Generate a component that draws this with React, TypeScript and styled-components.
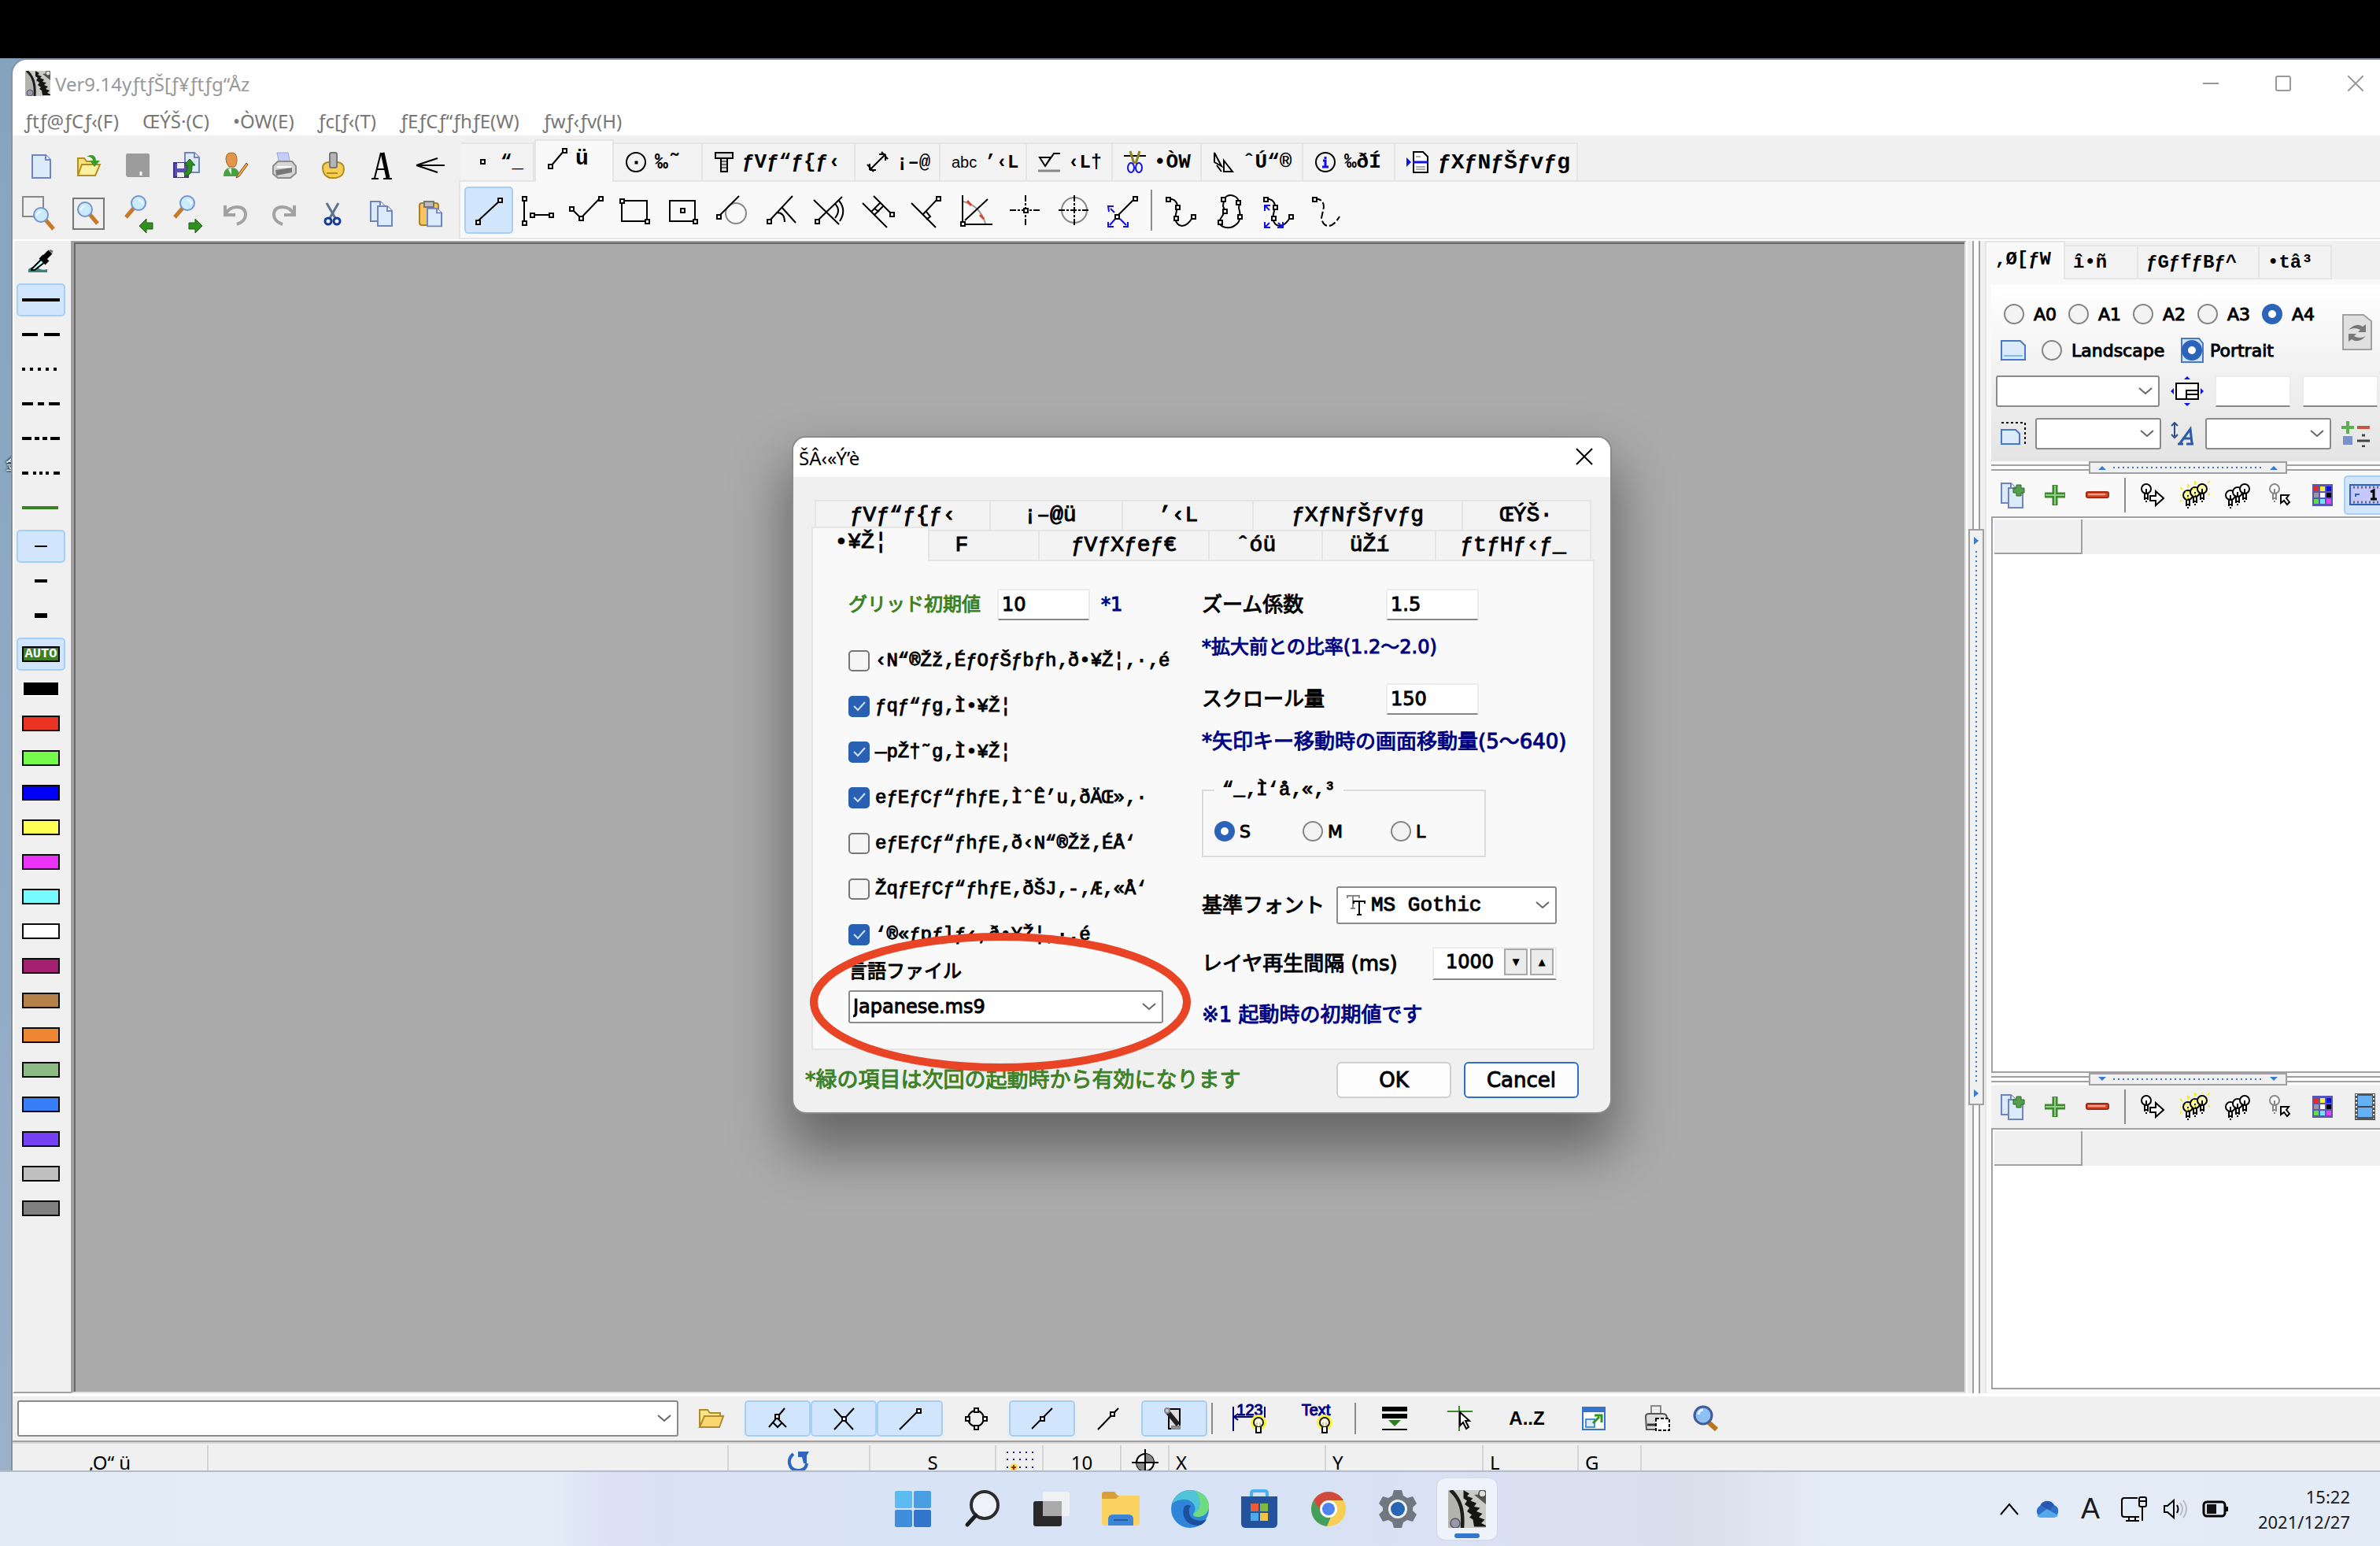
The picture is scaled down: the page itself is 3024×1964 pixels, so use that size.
import React, { ReactNode, useState } from "react";
import styled, { createGlobalStyle, css } from "styled-components";

const Global = createGlobalStyle`
  *, *::before, *::after { box-sizing: border-box; }
  body { margin: 0; background: #000; }
  button, input, select { font: inherit; color: inherit; margin: 0; }
`;

const ui = `"Noto Sans", "Noto Sans CJK JP", sans-serif`;
const gothic = `"DejaVu Sans", "Noto Sans CJK JP", sans-serif`;
const mono = `"Liberation Mono", "Noto Sans CJK JP", monospace`;

/* ---------- shell ---------- */

const Screen = styled.div`
  display: flex;
  flex-direction: column;
  min-height: 100vh;
  font-family: ${gothic};
  font-size: 24px;
  color: #000;
  overflow: hidden;
`;
const TopStrip = styled.div`
  height: 74px;
  background: #000;
`;
const Desktop = styled.main`
  flex: 1;
  display: flex;
  padding: 2px 0 0 16px;
  position: relative;
  background: linear-gradient(#84a4be, #9bb0c9);
`;
const DesktopCaption = styled.span`
  position: absolute;
  left: 7px;
  top: 504px;
  font-size: 20px;
  line-height: 24px;
  color: #fff;
  text-shadow: 0 0 3px #000, 0 0 3px #000;
`;
const AppWindow = styled.section`
  flex: 1;
  min-width: 0;
  display: flex;
  flex-direction: column;
  position: relative;
  background: #fff;
  border-top-left-radius: 18px;
  box-shadow: 0 0 0 2px #8293a5;
`;
const TitleBar = styled.header`
  display: flex;
  align-items: center;
  gap: 6px;
  height: 60px;
  padding-left: 16px;
  font-family: ${ui};
  color: #999;
`;
const TitleText = styled.h1`
  flex: 1;
  margin: 0;
  font-size: 24px;
  font-weight: 400;
`;
const CaptionButton = styled.button`
  width: 92px;
  height: 56px;
  border: 0;
  padding: 0;
  background: none;
  display: grid;
  place-items: center;
`;
const CaptionButtons = styled.div`
  display: flex;
  margin-right: -15px;
`;
const MenuBar = styled.nav`
  display: flex;
  gap: 30px;
  height: 36px;
  padding-left: 15px;
  font-family: ${ui};
  font-size: 24px;
  color: #777;
`;
const MenuItem = styled.button`
  border: 0;
  padding: 0;
  background: none;
  line-height: 34px;
  white-space: nowrap;
`;

/* ---------- toolbars ---------- */

const Toolbar = styled.div`
  display: flex;
  height: 132px;
  background: #f0f0f0;
`;
const FileTools = styled.div`
  display: grid;
  grid-template-columns: repeat(9, 62px);
  grid-auto-rows: 62px;
  padding: 7px 5px 0 4px;
`;
const ToolButton = styled.button<{ $on?: boolean; $w?: number; $h?: number }>`
  width: ${(p) => p.$w ?? 62}px;
  height: ${(p) => p.$h ?? 62}px;
  flex: none;
  padding: 0;
  display: grid;
  place-items: center;
  border: 2px solid transparent;
  border-radius: 5px;
  background: none;
  ${(p) =>
    p.$on &&
    css`
      background: #d1e6fd;
      border-color: #a6cff5;
    `}
`;
const TabArea = styled.div`
  flex: 1;
  min-width: 0;
  display: flex;
  flex-direction: column;
`;
const TabStrip = styled.div`
  display: flex;
  align-items: flex-end;
  height: 57px;
  padding-left: 3px;
`;
const ToolTab = styled.button<{ $w: number; $on?: boolean; $size: number }>`
  width: ${(p) => p.$w}px;
  height: ${(p) => (p.$on ? 54 : 48)}px;
  margin-bottom: ${(p) => (p.$on ? -2 : 0)}px;
  padding: 0 0 ${(p) => (p.$on ? 8 : 0)}px 14px;
  display: flex;
  align-items: center;
  gap: 10px;
  border: 2px solid #e5e5e5;
  border-bottom: 0;
  border-left-width: ${(p) => (p.$on ? 2 : 0)}px;
  background: ${(p) => (p.$on ? "#f9f9f9" : "#f3f3f3")};
  font-family: ${mono};
  font-weight: 700;
  font-size: ${(p) => p.$size}px;
  white-space: nowrap;
  position: relative;
`;
const AbcMark = styled.span`
  font-family: "Liberation Sans", sans-serif;
  font-weight: 400;
  font-size: 20px;
`;
const DrawPanel = styled.div`
  flex: 1;
  display: flex;
  align-items: center;
  padding-left: 5px;
  border: 2px solid #e5e5e5;
  border-right: 0;
  background: #f9f9f9;
`;
const Rule = styled.span<{ $h: number; $m: number }>`
  flex: none;
  width: 2px;
  height: ${(p) => p.$h}px;
  margin: 0 ${(p) => p.$m}px;
  background: #8c8c8c;
`;

/* ---------- work area ---------- */

const Work = styled.div`
  flex: 1;
  display: flex;
  position: relative;
  min-height: 0;
  border-top: 2px solid #fff;
  border-bottom: 4px solid #fff;
  background: #f0f0f0;
`;
const SideBar = styled.aside`
  width: 74px;
  display: flex;
  flex-direction: column;
  gap: 7px;
  padding: 3px 0 0 3px;
  border-left: 2px solid #fff;
  border-bottom: 2px solid #a0a0a0;
`;
const SideGroup = styled.div`
  display: flex;
  flex-direction: column;
  gap: 2px;
`;
const Swatch = styled.span<{ $c: string; $line?: string }>`
  width: 48px;
  height: 20px;
  background: ${(p) => p.$c};
  border: 2px solid ${(p) => p.$line ?? "#0a0a0a"};
`;
const AutoMark = styled.span`
  width: 48px;
  height: 20px;
  background: #3b8124;
  border: 2px solid #000;
  color: #fff;
  font: 700 17px/16px ${mono};
  text-align: center;
`;
const Canvas = styled.div`
  flex: 1;
  min-width: 0;
  background: #ababab;
  border: 2px solid;
  border-color: #a0a0a0 #e3e3e3 #e3e3e3 #a0a0a0;
  border-left-width: 4px;
  box-shadow: inset 2px 2px 0 #696969;
`;
const VSplit = styled.div`
  width: 24px;
  display: flex;
  flex-direction: column;
  align-items: center;
  border-left: 2px solid #fff;
`;
const VRail = styled.div`
  flex: 1 1 0;
  width: 10px;
  border: 2px solid #a0a0a0;
  border-width: 0 2px;
  background: #fff;
`;
const VGrip = styled.div`
  height: 50%;
  width: 20px;
  padding: 8px 0;
  display: flex;
  flex-direction: column;
  align-items: center;
  justify-content: space-between;
  border: 2px solid #a0a0a0;
`;
const VDots = styled.span`
  flex: 1;
  width: 2px;
  margin: 8px 0;
  background: repeating-linear-gradient(#3a7bd0 0 2px, transparent 2px 6px);
`;
const RightPanel = styled.aside`
  width: 502px;
  flex: none;
  display: flex;
  flex-direction: column;
  padding-left: 6px;
  padding-bottom: 5px;
  border-left: 2px solid #e5e5e5;
  background: #f9f9f9;
  overflow: hidden;
`;
const PanelTabs = styled.div`
  display: flex;
  align-items: flex-end;
  height: 49px;
  margin: 0 0 7px -6px;
  background: #f0f0f0;
`;
const PanelTab = styled.button<{ $w: number; $on?: boolean }>`
  width: ${(p) => p.$w}px;
  height: ${(p) => (p.$on ? 49 : 44)}px;
  padding: 0 0 ${(p) => (p.$on ? 4 : 0)}px 10px;
  text-align: left;
  white-space: nowrap;
  border: 2px solid #e5e5e5;
  border-left: 0;
  border-bottom-width: ${(p) => (p.$on ? 0 : 2)}px;
  background: ${(p) => (p.$on ? "#f9f9f9" : "#f3f3f3")};
  font-family: ${mono};
  font-weight: 700;
  font-size: 24px;
`;
const PageForm = styled.div`
  padding: 14px 0 10px;
  background: linear-gradient(#fff, #e4e4e4);
`;
const PageHead = styled.div`
  display: flex;
  align-items: center;
`;
const PageChoices = styled.div`
  width: 446px;
`;
const FormRow = styled.div<{ $h: number; $pl: number; $gap?: number }>`
  display: flex;
  align-items: center;
  gap: ${(p) => p.$gap ?? 0}px;
  height: ${(p) => p.$h}px;
  padding-left: ${(p) => p.$pl}px;
`;
const RadioLabel = styled.label<{ $w?: number; $gap?: number }>`
  display: flex;
  align-items: center;
  gap: ${(p) => p.$gap ?? 12}px;
  width: ${(p) => (p.$w ? `${p.$w}px` : "auto")};
  flex: none;
  font-size: 22px;
  -webkit-text-stroke: 1px #000;
`;
const Radio = styled.input.attrs({ type: "radio" })`
  appearance: none;
  width: 26px;
  height: 26px;
  flex: none;
  border: 2px solid #858585;
  border-radius: 50%;
  background: #f3f3f3;
  &:checked {
    border: 8px solid #2a63b8;
    background: #fff;
  }
`;
const Stack = styled.span`
  display: grid;
  place-items: center;
  > * {
    grid-area: 1 / 1;
  }
`;
const SelectWrap = styled.span<{ $w: number; $h: number }>`
  display: grid;
  align-items: center;
  flex: none;
  width: ${(p) => p.$w}px;
  height: ${(p) => p.$h}px;
  > * {
    grid-area: 1 / 1;
  }
  > svg.chev {
    justify-self: end;
    margin-right: 8px;
    pointer-events: none;
  }
  > svg.lead {
    justify-self: start;
    margin-left: 13px;
    pointer-events: none;
  }
`;
const SelectBox = styled.select<{ $pl?: number }>`
  appearance: none;
  width: 100%;
  height: 100%;
  padding: 0 40px 0 ${(p) => p.$pl ?? 4}px;
  border: 2px solid #8a8a8a;
  border-radius: 3px;
  background: #fff;
`;
const TextField = styled.input<{ $w: number; $h?: number }>`
  flex: none;
  width: ${(p) => p.$w}px;
  height: ${(p) => p.$h ?? 40}px;
  padding: 0 4px;
  border: 2px solid #ececec;
  border-bottom-color: #868686;
  border-radius: 3px;
  background: #fff;
`;
const HSplit = styled.div`
  height: 16px;
  flex: none;
  display: flex;
  align-items: center;
`;
const HRail = styled.span<{ $grow?: boolean }>`
  width: ${(p) => (p.$grow ? "auto" : "124px")};
  flex: ${(p) => (p.$grow ? 1 : "none")};
  height: 8px;
  border: 2px solid #a0a0a0;
  border-width: 2px 0;
  background: #fff;
`;
const HGrip = styled.span`
  width: 252px;
  height: 16px;
  padding: 0 9px;
  display: flex;
  align-items: center;
  gap: 8px;
  border: 2px solid #a0a0a0;
  background: #f0f0f0;
`;
const HDots = styled.span`
  flex: 1;
  height: 2px;
  background: repeating-linear-gradient(90deg, #3a7bd0 0 2px, transparent 2px 6px);
`;
const LayerTools = styled.div<{ $gray?: boolean }>`
  display: flex;
  align-items: center;
  height: 54px;
  flex: none;
  background: ${(p) => (p.$gray ? "#f0f0f0" : "#f9f9f9")};
`;
const LayerTable = styled.div<{ $grow: number }>`
  flex: ${(p) => p.$grow} 1 0;
  min-height: 0;
  border: 2px solid #a0a0a6;
  border-right: 0;
  background: #fff;
`;
const LayerHead = styled.div`
  height: 46px;
  display: flex;
  background: #f0f0f0;
  border: 2px solid #fff;
  border-width: 2px 0 0 2px;
`;
const LayerHeadCell = styled.span`
  width: 112px;
  border: 2px solid #a0a0a0;
  border-width: 0 2px 2px 0;
`;

/* ---------- bottom bars ---------- */

const BottomBar = styled.div`
  display: flex;
  align-items: center;
  height: 56px;
  padding-left: 6px;
  background: #f0f0f0;
`;
const SortMark = styled.span`
  font: 700 24px "Liberation Sans", sans-serif;
`;
const StatusBar = styled.footer`
  display: flex;
  height: 38px;
  border-top: 2px solid #a0a0a0;
  box-shadow: inset 0 2px 0 #d8d8d8;
  padding-top: 4px;
  background: #f0f0f0;
  overflow: hidden;
  font-family: ${ui};
  font-size: 24px;
`;
const StatusCell = styled.span<{ $w: number; $c?: boolean }>`
  flex: none;
  width: ${(p) => p.$w}px;
  display: flex;
  justify-content: ${(p) => (p.$c ? "center" : "flex-start")};
  padding: ${(p) => (p.$c ? "5px 0 0" : "5px 0 0 8px")};
  line-height: 34px;
  border-right: 2px solid #d4d4d4;
  white-space: pre;
`;
const TaskBar = styled.footer`
  display: grid;
  grid-template-columns: 1fr auto 1fr;
  align-items: center;
  height: 96px;
  border-top: 2px solid #b4bcc8;
  position: relative;
  background: linear-gradient(90deg, #e3ecf6 0, #e4edf7 23%, #dbe0f3 26%, #d9e3f6 36%, #d8e2f5 56%, #dcdfec 72%, #e4edf7 77%, #e3ebf6 100%);
  font-family: ${ui};
  font-size: 22px;
  color: #1a1a1a;
`;
const TaskApps = styled.div`
  grid-column: 2;
  display: flex;
`;
const TaskButton = styled.button<{ $on?: boolean }>`
  width: 76px;
  height: 78px;
  margin: 0 6px;
  padding: 0;
  display: grid;
  place-items: center;
  position: relative;
  border: 0;
  border-radius: 10px;
  background: ${(p) => (p.$on ? "#eef2fb" : "none")};
  box-shadow: ${(p) => (p.$on ? "0 0 0 1px #d3dae8" : "none")};
`;
const RunMark = styled.span`
  position: absolute;
  bottom: 2px;
  left: 22px;
  width: 32px;
  height: 6px;
  border-radius: 3px;
  background: #3577cf;
`;
const Tray = styled.div`
  justify-self: end;
  display: flex;
  align-items: center;
  gap: 18px;
  padding-right: 38px;
`;
const TrayLetter = styled.span`
  width: 40px;
  text-align: center;
  font-family: "Liberation Sans", sans-serif;
  font-size: 36px;
`;
const Clock = styled.time`
  width: 136px;
  text-align: right;
  line-height: 32px;
`;

/* ---------- dialog ---------- */

const Dialog = styled.section`
  position: absolute;
  left: 992px;
  top: 250px;
  width: 1038px;
  border-radius: 16px;
  background: #f0f0f0;
  box-shadow: 0 0 0 2px #8a8a8a, 0 40px 70px 10px rgba(0, 0, 0, 0.4);
`;
const DialogTitle = styled.header`
  display: flex;
  align-items: center;
  justify-content: space-between;
  height: 50px;
  padding-left: 7px;
  border-radius: 16px 16px 0 0;
  background: #fff;
  font-family: ${ui};
`;
const DialogName = styled.h2`
  margin: 0;
  font-size: 24px;
  font-weight: 400;
`;
const DialogClose = styled.button`
  width: 66px;
  height: 50px;
  border: 0;
  padding: 0;
  background: none;
`;
const DialogTabs = styled.div`
  margin: 29px 24px 0 25px;
`;
const DialogTabRow = styled.div<{ $pl?: number }>`
  display: flex;
  align-items: flex-end;
  height: 38px;
  margin-right: -2px;
  padding-left: ${(p) => p.$pl ?? 0}px;
`;
const DialogTab = styled.button<{ $w: number; $pr: number; $on?: boolean; $first?: boolean }>`
  width: ${(p) => p.$w}px;
  height: ${(p) => (p.$on ? 44 : 38)}px;
  margin-bottom: ${(p) => (p.$on ? -2 : 0)}px;
  margin-left: ${(p) => (p.$on ? -4 : 0)}px;
  padding: 0 ${(p) => p.$pr}px ${(p) => (p.$on ? 6 : 0)}px 0;
  position: relative;
  text-align: center;
  white-space: nowrap;
  border: 2px solid #e5e5e5;
  border-bottom: 0;
  border-left-width: ${(p) => (p.$on || p.$first ? 2 : 0)}px;
  background: ${(p) => (p.$on ? "#f9f9f9" : "#f3f3f3")};
  font-family: ${mono};
  font-size: 28px;
  line-height: 32px;
  -webkit-text-stroke: 1px #000;
`;
const DialogPage = styled.div`
  display: grid;
  grid-template-columns: 449px 1fr;
  margin: 0 20px 0 23px;
  padding: 31px 0 23px 45px;
  border: 2px solid #e5e5e5;
  background: #f9f9f9;
`;
const Column = styled.div`
  display: flex;
  flex-direction: column;
  align-items: flex-start;
  min-width: 0;
`;
const Row = styled.div<{ $h: number; $mt?: number }>`
  display: flex;
  align-items: center;
  height: ${(p) => p.$h}px;
  margin-top: ${(p) => p.$mt ?? 0}px;
  white-space: nowrap;
  -webkit-text-stroke-width: 1px;
`;
const FieldLabel = styled.label<{ $w?: number; $c?: string; $s?: number }>`
  flex: none;
  width: ${(p) => (p.$w ? `${p.$w}px` : "auto")};
  font-size: ${(p) => p.$s ?? 26}px;
  line-height: 34px;
  color: ${(p) => p.$c ?? "#000"};
`;
const Note = styled.span<{ $c?: string; $s?: number }>`
  font-size: ${(p) => p.$s ?? 26}px;
  line-height: 34px;
  color: ${(p) => p.$c ?? "#000080"};
`;
const StarNote = styled(Note)`
  margin-left: 14px;
`;
const CheckLabel = styled.label<{ $clip?: boolean }>`
  display: flex;
  align-items: center;
  gap: 7px;
  height: 58px;
  width: ${(p) => (p.$clip ? "402px" : "auto")};
  overflow: hidden;
  white-space: nowrap;
  font-family: ${mono};
  font-size: 24px;
  -webkit-text-stroke: 1px #000;
`;
const CheckBox = styled.input.attrs({ type: "checkbox" })`
  appearance: none;
  width: 27px;
  height: 27px;
  border: 2px solid #767676;
  border-radius: 5px;
  background: #f5f5f5;
  &:checked {
    background: #2a60b3;
    border-color: #2a60b3;
  }
`;
const Checks = styled.div`
  margin-top: 18px;
  display: flex;
  flex-direction: column;
`;
const SizeGroup = styled.fieldset`
  width: 361px;
  height: 100px;
  margin: 27px 0 0;
  padding: 24px 0 0 14px;
  border: 2px solid #dcdcdc;
  display: flex;
  align-items: flex-start;
`;
const SizeLegend = styled.legend`
  padding: 0 10px;
  font-family: ${mono};
  font-size: 24px;
  line-height: 30px;
  -webkit-text-stroke: 1px #000;
`;
const Spin = styled.span`
  display: flex;
  align-items: center;
  gap: 3px;
  width: 158px;
  height: 42px;
  padding: 0 2px 4px 0;
  border: 2px solid #ececec;
  border-bottom-color: #868686;
  background: #fff;
`;
const SpinInput = styled.input`
  flex: 1;
  min-width: 0;
  width: 80px;
  padding: 0 10px 0 0;
  border: 0;
  background: none;
  text-align: right;
`;
const SpinButton = styled.button`
  width: 30px;
  height: 34px;
  padding: 0;
  border: 2px solid #a9a9a9;
  background: #ececec;
  font-size: 12px;
  line-height: 20px;
  -webkit-text-stroke-width: 0;
`;
const DialogFoot = styled.div`
  display: flex;
  align-items: center;
  gap: 16px;
  height: 79px;
  padding: 0 40px 4px 15px;
  -webkit-text-stroke-width: 1px;
`;
const FootNote = styled(Note)`
  flex: 1;
  white-space: nowrap;
`;
const PushButton = styled.button<{ $focus?: boolean }>`
  width: 146px;
  height: 46px;
  padding: 0;
  border: 2px solid ${(p) => (p.$focus ? "#2f6fc4" : "#cfcfcf")};
  border-radius: 6px;
  background: #fdfdfd;
  font-size: 26px;
`;
const FontPick = styled.span`
  font-family: ${mono};
  font-size: 26px;
`;
const Marker = styled.svg`
  position: absolute;
  left: 19px;
  top: 626px;
  width: 488px;
  height: 182px;
  pointer-events: none;
`;

/* ---------- drawings ---------- */

type IcoProps = { w?: number; h?: number; v?: string; children: ReactNode; className?: string };
const Ico = ({ w = 32, h = w, v, children, className }: IcoProps) => (
  <svg className={className} width={w} height={h} viewBox={v ?? `0 0 ${w} ${h}`} fill="none" stroke="#000" strokeWidth={2} aria-hidden>
    {children}
  </svg>
);
const P = ({ x, y }: { x: number; y: number }) => <rect x={x - 2} y={y - 2} width={5} height={5} fill="#fff" />;
const Chevron = () => (
  <Ico className="chev" w={20} h={12}>
    <path d="M2 2l8 7 8-7" stroke="#666" />
  </Ico>
);
const Gear = ({ s }: { s: number }) => (
  <Ico w={s} v="0 0 32 32">
    <rect width="32" height="32" fill="#c9c9c5" stroke="none" />
    <path d="M0 0h5c7 8 7 20 6 32H0z" fill="#b4b4ae" stroke="none" />
    <path d="M2 0c9 8 11 18 10 32" stroke="#1d1d1b" strokeWidth="3" />
    <path d="M13 0l5 3-2 2 5 2-2 2 5 2-2 3 5 1-3 3 5 2-3 3 5 2-3 3 6 3h-12l-1-6-3-2 2-2-4-3 2-3-4-3 2-3-3-2z" fill="#151514" stroke="none" />
    <path d="M22 4l10 8V3z" fill="#55554f" stroke="none" />
    <circle cx="29" cy="3" r="3" fill="#ddd" stroke="#444" strokeWidth="1" />
    <circle cx="6" cy="28" r="4" fill="#99a" stroke="#556" strokeWidth="1" />
  </Ico>
);
const Page = ({ x = 0, y = 0 }: { x?: number; y?: number }) => (
  <g transform={`translate(${x} ${y})`}>
    <path d="M1 1h12l6 6v19H1z" fill="#dcebfb" stroke="#7085c0" />
    <path d="M13 1v6h6" fill="#fff" stroke="#7085c0" />
  </g>
);
const Lens = ({ x = 0, y = 0, flip = false }: { x?: number; y?: number; flip?: boolean }) => (
  <g transform={`translate(${x} ${y})${flip ? " scale(-1 1)" : ""}`}>
    <path d="M4 4l12 14" stroke="#c87a2c" strokeWidth="5" />
    <circle cx="0" cy="0" r="9" fill="#c9ebfd" stroke="#7394cc" />
    <path d="M-5 1a5 5 0 0 1 5-5" stroke="#fff" />
  </g>
);

const fileIcons: [string, ReactNode][] = [
  ["New", <Ico w={32} h={34}><g transform="translate(5 3)"><path d="M1 1h17l6 6v23H1z" fill="#dcebfb" stroke="#7085c0" /><path d="M18 1v6h6" fill="#fff" stroke="#7085c0" /></g></Ico>],
  ["Open", <Ico w={34}><path d="M3 30V8h8l3 4h11v4" fill="#f7e27a" stroke="#b58d24" /><path d="M3 30l5-14h23l-6 14z" fill="#fdf0a0" stroke="#b58d24" /><path d="M14 6c8-5 12 0 12 5h5l-7 8-6-8h4c0-3-3-5-8-5z" fill="#3b9b28" stroke="none" /></Ico>],
  ["Save", <Ico w={32} h={34}><path d="M1 4q0-2 2-2h26q2 0 2 2v28H3l-2-2z" fill="#9c9c9c" stroke="none" /><path d="M20 25v5" stroke="#fff" strokeWidth="3" /></Ico>],
  ["Save as", <Ico w={36}><Page x={15} y={1} /><path d="M2 15h18v18H2z" fill="#5b4fae" stroke="#3d3483" /><path d="M6 15h9v7H6zM6 27h9v6H6z" fill="#eee" stroke="none" /><path d="M16 31q10 0 9-13h4l-7-8-7 8h4q1 8-4 9z" fill="#2d8f22" stroke="#1b6114" strokeWidth="1" /></Ico>],
  ["User", <Ico w={34}><path d="M2 31q0-11 10-11t10 11z" fill="#49a044" stroke="none" /><path d="M12 20v9l-4-7z" fill="#fff" stroke="none" /><path d="M5 9q0-8 7-8t7 8-3 10H9Q5 14 5 9z" fill="#e2964a" stroke="#a8642a" strokeWidth="1" /><path d="M31 14L20 29l-2 4 4-2 11-15z" fill="#f0b23c" stroke="#8a3b1a" strokeWidth="1" /></Ico>],
  ["Print", <Ico w={34}><path d="M8 1h14l3 14H11z" fill="#c3cef8" stroke="#9aa6dc" strokeWidth="1" /><path d="M3 18l6-6h18l5 6v9l-7 6H9l-6-5z" fill="#d6d6d6" stroke="#8b8b8b" /><path d="M6 23l21-3v6l-20 4z" fill="#777" stroke="none" /><path d="M8 19h18" stroke="#fff" /></Ico>],
  ["Hand", <Ico w={34}><path d="M4 20q0-6 7-7h12q8 1 8 9 0 9-10 11h-8q-9-3-9-13z" fill="#f3cf55" stroke="#b48a1d" /><rect x="13" y="1" width="9" height="19" rx="2" fill="#b5b5b5" stroke="#777" /><path d="M9 27h14" stroke="#b48a1d" /></Ico>],
  ["Font", <Ico w={28} h={38}><path d="M5 35L13 3" strokeWidth="2" /><path d="M15 3l7 32" strokeWidth="5" /><path d="M8 24h10M1 36h9M16 36h11" /></Ico>],
  ["Arrow", <Ico w={38} h={30}><path d="M1 15h36M1 15L28 6M1 15l27 9" /></Ico>],
  ["Zoom window", <Ico w={46} h={46}><rect x="1" y="1" width="26" height="25" stroke="#888" /><Lens x={24} y={24} /></Ico>],
  ["Zoom fit", <Ico w={42} h={42}><rect x="1" y="1" width="39" height="39" stroke="#777" /><Lens x={16} y={15} /></Ico>],
  ["Zoom back", <Ico w={42} h={50}><Lens x={22} y={11} flip /><path d="M40 36v8h-8v5l-9-9 9-9v5z" fill="#338f20" stroke="#1d6212" strokeWidth="1" /></Ico>],
  ["Zoom next", <Ico w={42} h={50}><Lens x={22} y={11} flip /><path d="M24 36v8h8v5l9-9-9-9v5z" fill="#338f20" stroke="#1d6212" strokeWidth="1" /></Ico>],
  ["Undo", <Ico w={32}><path d="M3 5v12h13M3 17Q8 7 18 7q11 0 11 10 0 8-11 12" stroke="#a2a2a2" strokeWidth="4" /></Ico>],
  ["Redo", <Ico w={32}><path d="M29 5v12H16M29 17Q24 7 14 7 3 7 3 17q0 8 11 12" stroke="#a2a2a2" strokeWidth="4" /></Ico>],
  ["Cut", <Ico w={26} h={30}><path d="M5 1l11 19M20 1L9 20" stroke="#5c7391" strokeWidth="3" /><circle cx="7" cy="24" r="4" stroke="#143a9e" strokeWidth="3" /><circle cx="18" cy="24" r="4" stroke="#143a9e" strokeWidth="3" /></Ico>],
  ["Copy", <Ico w={32} h={34}><Page x={1} y={0} /><Page x={10} y={6} /></Ico>],
  ["Paste", <Ico w={32} h={34}><rect x="2" y="3" width="24" height="28" rx="3" fill="#f6c560" stroke="#a8802c" /><path d="M8 1h12v7H8z" fill="#bbb" stroke="#777" /><g transform="translate(11 9) scale(1 .9)"><Page /></g></Ico>],
];

const Spline = ({ dash }: { dash?: string }) => (
  <path d="M7 12h5q7 2 7 10l-3 14q2 10 9 10t14-12" strokeDasharray={dash} />
);
const T = ({ children }: { children: ReactNode }) => <Ico w={44} h={52}>{children}</Ico>;
const blueArrows = (x: number, y: number) => (
  <path d={`M${x} ${y + 7}v-7h7M${x} ${y}l6 6M${x} ${y + 21}v7h7M${x} ${y + 28}l6-6M${x + 16} ${y + 28}h7v-7M${x + 23} ${y + 28}l-6-6`} stroke="#1212e6" />
);
const drawIcons: [string, ReactNode][] = [
  ["Line", <T><path d="M8 40L36 14" /><P x={8} y={41} /><P x={36} y={13} /></T>],
  ["Parallel", <T><path d="M5 12v30M15 32h24" /><P x={5} y={11} /><P x={5} y={42} /><P x={15} y={32} /><P x={39} y={32} /></T>],
  ["Polyline", <T><path d="M3 24l12 12 25-26" /><P x={3} y={24} /><P x={15} y={36} /><P x={40} y={11} /></T>],
  ["Rectangle", <T><path d="M5 14h32v26H5z" /><P x={5} y={14} /><P x={37} y={40} /></T>],
  ["Center rectangle", <T><path d="M4 14h32v26H4z" /><P x={20} y={26} /><P x={36} y={40} /></T>],
  ["Tangent", <T><circle cx="26" cy="30" r="13" stroke="#888" /><path d="M4 34L30 8" /><P x={4} y={34} /></T>],
  ["Bisector", <T><path d="M6 40L36 8M22 22l18 20M16 29q10 0 10 12" /><P x={6} y={40} /></T>],
  ["Angle", <T><path d="M5 40L37 9M1 13l32 31M28 18q8 8 0 18M33 14q10 12 1 26" /><P x={5} y={40} /></T>],
  ["Perpendicular", <T><path d="M1 17l31 31M15 8l22 22M12 28l11-11M16 32l11-11M16 24l6 4" /><P x={38} y={31} /></T>],
  ["Normal", <T><path d="M1 17l31 31M16 31l19-20M20 28l5 6-5 4" /><P x={35} y={11} /></T>],
  ["Angle line", <T><path d="M5 15q22 6 28 28" stroke="#999" /><path d="M4 7v37h38M7 39L36 12" /><path d="M10 14l5 6M26 32l5 5" stroke="#e0452c" strokeWidth="3" /><P x={4} y={43} /></T>],
  ["Cross", <T><path d="M2 26h40M22 7v38" strokeDasharray="8 2 3 2" /><P x={22} y={26} /></T>],
  ["Center mark", <T><circle cx="22" cy="26" r="16" stroke="#888" /><path d="M2 26h40M22 7v38" strokeDasharray="8 2 3 2" /></T>],
  ["Extend", <T><path d="M36 12L14 34" /><path d="M4 28l-1-7 7 0M6 24l5 5M12 37l-7 8M3 41v6h7M18 37l8 8M22 47h6v-6" stroke="#1212e6" /><P x={37} y={11} /><P x={14} y={34} /></T>],
];
const curveIcons: [string, ReactNode][] = [
  ["Spline", <T><Spline /><P x={7} y={12} /><P x={19} y={22} /><P x={17} y={36} /><P x={39} y={34} /></T>],
  ["Closed spline", <T><path d="M16 12q6-8 15-3 6 4 4 14 4 14-2 20-8 8-18 4-8-4-2-12 6-8 2-14z" /><P x={15} y={12} /><P x={34} y={16} /><P x={17} y={27} /><P x={36} y={34} /><P x={11} y={41} /></T>],
  ["Edit spline", <T><Spline />{blueArrows(6, 20)}<P x={7} y={12} /><P x={19} y={22} /><P x={17} y={36} /><P x={39} y={34} /></T>],
  ["Split spline", <T><Spline dash="9 3" /><P x={7} y={12} /></T>],
];

const toolTabs: [number, string, ReactNode, number][] = [
  [93, "“_", <Ico w={26}><rect x="11" y="10" width="5" height="5" /></Ico>, 24],
  [101, "ü", <Ico w={26} h={28}><path d="M5 24L22 4" /><P x={4} y={24} /><P x={22} y={4} /></Ico>, 28],
  [113, "‰˜", <Ico w={28}><circle cx="14" cy="14" r="12" /><rect x="13" y="13" width="3" height="3" fill="#000" strokeWidth="1" /></Ico>, 28],
  [194, "ƒVƒ“ƒ{ƒ‹", <Ico w={26} h={28}><path d="M2 2h22v7H2zM9 9h8v17H9z" fill="#ddd" /><path d="M9 13h8M9 17h8M9 21h8" strokeWidth="1" /></Ico>, 26],
  [108, "¡–@", <Ico w={28} h={28}><path d="M4 24L24 4M4 24v-8M4 24h8M24 4v8M24 4h-8M1 17l8 9M19 1l8 9" /></Ico>, 24],
  [110, "’‹L", <AbcMark>abc</AbcMark>, 24],
  [109, "‹L†", <Ico w={28} h={26}><path d="M2 7h14L9 18zM9 18L20 2h8" /><path d="M0 24h28" stroke="#888" strokeWidth="3" /></Ico>, 24],
  [113, "•ÒW", <Ico w={28} h={30}><path d="M0 7h28" /><path d="M8 1l5 16M20 1l-5 16" stroke="#8b8420" strokeWidth="3" /><ellipse cx="9" cy="22" rx="4" ry="6" stroke="#1212e6" /><ellipse cx="19" cy="22" rx="4" ry="6" stroke="#1212e6" /></Ico>, 26],
  [129, "ˆÚ“®", <Ico w={28} h={28}><path d="M2 2v12l9 5zM14 12l11 14H14zM5 18l6 8" /></Ico>, 26],
  [117, "‰ðÍ", <Ico w={28} h={28}><circle cx="14" cy="14" r="12" /><path d="M14 7v3M11 12h3v8M10 20h8" stroke="#1212e6" strokeWidth="3" /></Ico>, 26],
  [232, "ƒXƒNƒŠƒvƒg", <Ico w={30} h={30}><path d="M9 2h12l6 6v20H9z" fill="#fff" /><path d="M12 8h6M12 21h12M12 24h12" stroke="#aaa" /><path d="M8 15h20" stroke="#1212e6" strokeWidth="3" /><path d="M0 9l6 6-6 6z" fill="#1212e6" stroke="none" /></Ico>, 28],
];

const lineDashes = ["20 8", "4 6", "14 6 8 6", "12 4 6 4 6 4", "8 6 4 4 4 4 4 6"];
const swatches = ["#ea3323", "#75fb4c", "#0000f5", "#ffff54", "#ea33f7", "#75fbfd", "#ffffff", "#a62072", "#b5824b", "#ee8732", "#8cbb84", "#387ef7", "#7640f5", "#c0c0c0", "#808080"];

const bulb = (x: number, y: number, lit = false, c = "#000") => (
  <g transform={`translate(${x} ${y})`}>
    {lit && <path d="M0-9v-3M7-7l3-3M-7-7l-3-3M9 0h3M-9 0h-3M8 6l3 3M-8 6l-3 3" stroke="#f2ee28" />}
    <circle r="6" fill={lit ? "#fffcb0" : "#fff"} stroke={c} />
    <path d="M-2 6v8M2 6v8M0 0v6M-3 12h6M-1 16h2" stroke={c} />
  </g>
);
const frames = (
  <Ico w={40} h={32}><rect x="1" y="3" width="40" height="25" fill="#c5c8fb" stroke="#2f5fc0" /><path d="M5 6h36M5 25h36" stroke="#667" strokeWidth="3" strokeDasharray="2 3" /><path d="M8 18v-3h5" stroke="#2f5fc0" /><path d="M27 12l4-2v11M27 21h8" strokeWidth="3" /></Ico>
);
const film = (
  <Ico w={26} h={34}><rect x="2" y="1" width="22" height="31" fill="#66b0f5" stroke="#555" strokeWidth="4" /><path d="M2 1v31M24 1v31" stroke="#fff" strokeDasharray="2 3" /><path d="M4 17h18" stroke="#444" /></Ico>
);
const layerIcons: [string, ReactNode][] = [
  ["Add copy", <Ico w={32} h={34}><Page x={1} y={1} /><Page x={10} y={7} /><path d="M17 8h4V4h6v4h4v6h-4v4h-6v-4h-4z" fill="#559e4c" stroke="#2c6b26" strokeWidth="1" /></Ico>],
  ["Add", <Ico w={30}><path d="M15 2v26M2 15h26" stroke="#3f8a2e" strokeWidth="7" /><path d="M15 3v24M3 15h24" stroke="#93cf86" strokeWidth="2" /></Ico>],
  ["Remove", <Ico w={30}><rect x="1" y="11" width="28" height="7" rx="2" fill="#e0492c" stroke="#a22a14" /><path d="M3 14h22" stroke="#f3a58f" /></Ico>],
];
const lampIcons: [string, ReactNode][] = [
  ["Next lamp", <Ico w={32} h={34}>{bulb(8, 9)}<path d="M13 18h7v-6l10 9-10 9v-6h-7z" fill="#fff" /></Ico>],
  ["Lamps on", <Ico w={38} h={36}>{bulb(10, 18, true)}{bulb(19, 14, true)}{bulb(28, 10, true)}</Ico>],
  ["Lamps off", <Ico w={38} h={36}>{bulb(10, 18)}{bulb(19, 14)}{bulb(28, 10)}</Ico>],
  ["Lamp pick", <Ico w={32} h={34}>{bulb(9, 9, false, "#888")}<path d="M17 17h10l-3 4 4 5-3 3-4-5-4 3z" fill="#fff" /></Ico>],
  ["Palette", <Ico w={26} h={28}><rect x="1" y="1" width="24" height="26" fill="#5a56b8" stroke="#5a56b8" />{["#e02f22", "#f6f03a", "#0a12e0", "#999", "#fff", "#000", "#5de23b", "#6fe6f3", "#e745ea"].map((c, i) => <rect key={c} x={2 + (i % 3) * 8} y={3 + Math.floor(i / 3) * 8} width="6" height="6" fill={c} stroke="none" />)}</Ico>],
];

const snapIcons: [string, boolean, ReactNode][] = [
  ["Snap end", true, <Ico w={30}><path d="M24 2L4 26M14 14l12 12M9 20l6 6 6-6" /><P x={14} y={12} /></Ico>],
  ["Snap cross", true, <Ico w={30}><path d="M3 3l24 26M28 2L3 29" /><P x={15} y={15} /></Ico>],
  ["Snap point", true, <Ico w={30}><path d="M2 29L26 5" /><P x={26} y={5} /></Ico>],
  ["Snap circle", false, <Ico w={32}><circle cx="16" cy="16" r="10" /><P x={16} y={5} /><P x={5} y={16} /><P x={27} y={16} /><P x={16} y={27} /></Ico>],
  ["Snap middle", true, <Ico w={30}><path d="M2 28L28 2" /><P x={15} y={15} /></Ico>],
  ["Snap near", false, <Ico w={30}><path d="M2 29L28 2" /><P x={20} y={9} /></Ico>],
  ["Snap switch", true, <Ico w={30} h={32}><rect x="8" y="4" width="14" height="25" fill="#ddd" /><path d="M12 26h10v3H12z" fill="#999" stroke="#888" /><path d="M6 7l14 17" strokeWidth="6" stroke="#222" /><circle cx="6" cy="6" r="3" fill="#ccc" stroke="#888" /></Ico>],
];
const smallBulb = (x: number, y: number) => (
  <g transform={`translate(${x} ${y})`}>
    <circle r="10" fill="#fbf636" stroke="none" />
    <circle r="6" fill="#fffde0" stroke="#1b1b1b" />
    <path d="M-2 0v5M2 0v5" stroke="#999" strokeWidth="1" />
    <path d="M-3 6v7h6V6" fill="#fff" />
  </g>
);
const MarkText = styled.span`
  position: relative;
  display: grid;
  width: 46px;
  height: 40px;
  font: 400 20px/18px "Liberation Sans", sans-serif;
  color: #000080;
  text-align: center;
  -webkit-text-stroke: 1px #000080;
  > svg {
    position: absolute;
    inset: 0;
  }
`;
const viewIcons: [string, number, ReactNode][] = [
  ["Stack", 84, <Ico w={34}><path d="M1 5h32M1 14h32" strokeWidth="6" /><path d="M9 19h16l-8 8z" fill="#2f7d23" stroke="none" /><path d="M1 31h32" /></Ico>],
  ["Pointer", 84, <Ico w={34}><path d="M0 8h32M15 1v32" stroke="#3b8a2a" /><path d="M16 9v17l4-4 4 8 3-2-4-8h5z" fill="#fff" /></Ico>],
  ["Sort", 84, <SortMark>A..Z</SortMark>],
  ["Open window", 86, <Ico w={30}><rect x="1" y="1" width="28" height="28" fill="#fff" stroke="#3474cf" /><path d="M1 4h28" stroke="#3474cf" strokeWidth="6" /><path d="M5 16h11v10H5z" stroke="#4d90d8" fill="#dcecfb" /><path d="M14 21l8-8M16 11h9v9" stroke="#2f9420" strokeWidth="3" /></Ico>],
  ["Print preview", 74, <Ico w={34} h={34}><path d="M10 1h12v10H10z" fill="#eee" stroke="#888" /><path d="M3 15q0-4 4-4h18q5 0 5 6v14H4z" fill="#ddd" stroke="#555" /><path d="M16 17h17v15H16z" fill="#fff" strokeDasharray="4 2" /><path d="M5 25h10" stroke="#333" strokeWidth="3" /></Ico>],
  ["Search", 50, <Ico w={34} h={34}><path d="M21 22l10 9" stroke="#b8741e" strokeWidth="6" /><circle cx="14" cy="13" r="11" fill="#8fc0f5" stroke="#3f5c96" strokeWidth="3" /><path d="M8 12a6 6 0 0 1 6-6" stroke="#e7f3ff" strokeWidth="3" /></Ico>],
];

const taskIcons: [string, ReactNode][] = [
  ["Start", <Ico w={48}><g stroke="none"><rect x="1" y="1" width="22" height="22" rx="2" fill="#5cbcf1" /><rect x="25" y="1" width="22" height="22" rx="2" fill="#4a9fe2" /><rect x="1" y="25" width="22" height="22" rx="2" fill="#3f8ddb" /><rect x="25" y="25" width="22" height="22" rx="2" fill="#3275cd" /></g></Ico>],
  ["Search", <Ico w={46} h={48}><circle cx="26" cy="19" r="17" stroke="#2c2c2c" strokeWidth="4" fill="#eef1fa" /><path d="M15 32L4 44" stroke="#1c1c1c" strokeWidth="5" strokeLinecap="round" /></Ico>],
  ["Task view", <Ico w={48}><g stroke="none"><rect x="1" y="14" width="36" height="32" rx="3" fill="#2a2a2a" /><rect x="13" y="2" width="34" height="31" rx="3" fill="#f4f4f4" opacity=".8" /><path d="M13 14h24v19H13z" fill="#aaa" /></g></Ico>],
  ["Explorer", <Ico w={50}><g stroke="none"><path d="M1 6q0-3 3-3h13l4 5h25q3 0 3 3v8H1z" fill="#d99f36" /><path d="M1 12h18l4-4h23q3 0 3 3v32q0 3-3 3H4q-3 0-3-3z" fill="#fbd362" /><path d="M9 46V38q0-6 6-6h20q6 0 6 6v8z" fill="#3b85d6" /><path d="M16 39h18" stroke="#235c9f" strokeWidth="2" /></g></Ico>],
  ["Edge", <Ico w={50}><g stroke="none"><circle cx="25" cy="25" r="24" fill="#2f86d8" /><path d="M2 19C5 7 15 1 25 1c14 0 24 9 24 20 0 9-7 14-14 14-5 0-7-2-5-5 5-9-3-17-12-17C11 13 5 15 2 19z" fill="#4fc3d8" /><path d="M32 2c10 3 17 10 17 19 0 9-7 14-14 14-5 0-7-2-5-5 8-3 12-14 2-28z" fill="#6edb7c" /><path d="M17 24c-3 13 6 22 18 22 5 0 9-4 11-8-9 4-21 1-22-8-1-4 0-6 2-9-4-2-8-1-9 3z" fill="#1d4f9c" /></g></Ico>],
  ["Store", <Ico w={48} h={50}><path d="M14 9V5q0-3 3-3h14q3 0 3 3v4" stroke="#48b1ef" strokeWidth="4" /><path d="M1 9h46v34q0 6-6 6H7q-6 0-6-6z" fill="#23539b" stroke="none" /><g stroke="none"><path d="M13 18h10v10H13z" fill="#ea5a33" /><path d="M25 18h10v10H25z" fill="#7fba3b" /><path d="M13 30h10v10H13z" fill="#4ea9ea" /><path d="M25 30h10v10H25z" fill="#f7c143" /></g></Ico>],
  ["Chrome", <Ico w={46}><g stroke="none"><circle cx="23" cy="23" r="22" fill="#f7cf54" /><path d="M4 12a22 22 0 0 1 38 0H23L13 27z" fill="#d1493b" /><path d="M4 12l11 17 11 4-5 12A22 22 0 0 1 4 12z" fill="#459f5c" /><circle cx="23" cy="23" r="11" fill="#fff" /><circle cx="23" cy="23" r="8" fill="#4f83ee" /></g></Ico>],
  ["Settings", <Ico w={50}><g stroke="none"><path d="M20 1h10l2 7 5 3 7-2 5 9-5 5v4l5 5-5 9-7-2-5 3-2 7H20l-2-7-5-3-7 2-5-9 5-5v-4l-5-5 5-9 7 2 5-3z" fill="#6f7881" /><circle cx="25" cy="25" r="12" fill="#f1f1f1" /><circle cx="25" cy="25" r="9" fill="#2567b4" /></g></Ico>],
  ["Drafting", <Gear s={48} />],
];

/* ---------- parts ---------- */

type PickProps = { w: number; h?: number; name: string; id?: string; value?: string; lead?: ReactNode; pl?: number };
const Pick = ({ w, h = 42, name, id, value = "", lead, pl }: PickProps) => (
  <SelectWrap $w={w} $h={h}>
    <SelectBox id={id} aria-label={id ? undefined : name} $pl={pl} defaultValue={value}>
      <option>{value}</option>
    </SelectBox>
    {lead}
    <Chevron />
  </SelectWrap>
);

const Split = ({ up }: { up?: boolean }) => {
  const tri = (
    <Ico w={12} h={6}>
      <path d={up ? "M1 6l5-5 5 5z" : "M1 0l5 5 5-5z"} fill="#3a7bd0" stroke="none" />
    </Ico>
  );
  return (
    <HSplit>
      <HRail />
      <HGrip>
        {tri}
        <HDots />
        {tri}
      </HGrip>
      <HRail $grow />
    </HSplit>
  );
};

const Layers = ({ gray, grow, last }: { gray?: boolean; grow: number; last: ReactNode }) => (
  <>
    <LayerTools $gray={gray}>
      {layerIcons.map(([n, i]) => (
        <ToolButton key={n} aria-label={n} $w={54} $h={48}>{i}</ToolButton>
      ))}
      <Rule $h={44} $m={7} />
      {lampIcons.map(([n, i]) => (
        <ToolButton key={n} aria-label={n} $w={54} $h={48}>{i}</ToolButton>
      ))}
      <ToolButton aria-label="Frames" $w={54} $h={50} $on={!gray}>{last}</ToolButton>
    </LayerTools>
    <LayerTable $grow={grow}>
      <LayerHead>
        <LayerHeadCell />
      </LayerHead>
    </LayerTable>
  </>
);

const checks: [string, boolean, boolean][] = [
  ["‹N“®Žž‚ÉƒOƒŠƒbƒh‚ð•¥Ž¦‚·‚é", false, false],
  ["ƒqƒ“ƒg‚Ì•¥Ž¦", true, false],
  ["—pŽ†˜g‚Ì•¥Ž¦", true, false],
  ["eƒEƒCƒ“ƒhƒE‚ÌˆÊ’u‚ðÄŒ»‚·", true, true],
  ["eƒEƒCƒ“ƒhƒE‚ð‹N“®Žž‚ÉÅ‘", false, true],
  ["ŽqƒEƒCƒ“ƒhƒE‚ðŠJ‚-‚Æ‚«Å‘", false, true],
  ["‘®«ƒpƒlƒ‹‚ð•¥Ž¦‚·‚é", true, false],
];

const Check = ({ text, on, clip }: { text: string; on: boolean; clip: boolean }) => {
  const [v, setV] = useState(on);
  return (
    <CheckLabel $clip={clip}>
      <Stack>
        <CheckBox checked={v} onChange={() => setV(!v)} />
        {v && (
          <Ico w={18} h={14}>
            <path d="M2 7l5 5 9-10" stroke="#cfe0f7" />
          </Ico>
        )}
      </Stack>
      {text}
    </CheckLabel>
  );
};

const backTabs: [string, number, number][] = [
  ["ƒVƒ“ƒ{ƒ‹", 224, 0],
  ["¡–@ü", 168, 16],
  ["’‹L", 166, 24],
  ["ƒXƒNƒŠƒvƒg", 266, 0],
  ["ŒÝŠ·", 163, 0],
];
const frontTabs: [string, number, number][] = [
  ["•¥Ž¦", 150, 24],
  ["F", 140, 56],
  ["ƒVƒXƒeƒ€", 216, 0],
  ["ˆóü", 144, 24],
  ["üŽí", 144, 24],
  ["ƒtƒHƒ‹ƒ_", 197, 0],
];

const Settings = () => (
  <Dialog role="dialog" aria-labelledby="dlg">
    <DialogTitle>
      <DialogName id="dlg">ŠÂ‹«Ý’è</DialogName>
      <DialogClose aria-label="Close">
        <Ico w={22}><path d="M1 1l20 20M21 1L1 21" /></Ico>
      </DialogClose>
    </DialogTitle>
    <DialogTabs role="tablist">
      <DialogTabRow $pl={2}>
        {backTabs.map(([t, w, pr], k) => (
          <DialogTab key={t} role="tab" $w={w} $pr={pr} $first={k === 0}>{t}</DialogTab>
        ))}
      </DialogTabRow>
      <DialogTabRow $pl={2}>
        {frontTabs.map(([t, w, pr], k) => (
          <DialogTab key={t} role="tab" $w={w} $pr={pr} $on={k === 0} aria-selected={k === 0}>{t}</DialogTab>
        ))}
      </DialogTabRow>
    </DialogTabs>
    <DialogPage>
      <Column>
        <Row $h={48}>
          <FieldLabel htmlFor="grid" $w={189} $c="#3b8124" $s={24}>グリッド初期値</FieldLabel>
          <TextField id="grid" $w={118} defaultValue="10" />
          <StarNote $s={24}>*1</StarNote>
        </Row>
        <Checks>
          {checks.map(([t, on, clip]) => (
            <Check key={t} text={t} on={on} clip={clip} />
          ))}
        </Checks>
        <Row $h={36}>
          <FieldLabel htmlFor="lang" $s={24}>言語ファイル</FieldLabel>
        </Row>
        <Row $h={44} $mt={5}>
          <Pick id="lang" name="lang" w={400} value="Japanese.ms9" />
        </Row>
      </Column>
      <Column>
        <Row $h={48}>
          <FieldLabel htmlFor="zoom" $w={234}>ズーム係数</FieldLabel>
          <TextField id="zoom" $w={118} defaultValue="1.5" />
        </Row>
        <Row $h={40} $mt={10}>
          <Note $s={24}>*拡大前との比率(1.2～2.0)</Note>
        </Row>
        <Row $h={48} $mt={22}>
          <FieldLabel htmlFor="scroll" $w={234}>スクロール量</FieldLabel>
          <TextField id="scroll" $w={118} defaultValue="150" />
        </Row>
        <Row $h={40} $mt={10}>
          <Note>*矢印キー移動時の画面移動量(5～640)</Note>
        </Row>
        <SizeGroup>
          <SizeLegend>“_‚Ì‘å‚«‚³</SizeLegend>
          <RadioLabel $w={112} $gap={6}><Radio name="dot" defaultChecked />S</RadioLabel>
          <RadioLabel $w={112} $gap={6}><Radio name="dot" />M</RadioLabel>
          <RadioLabel $gap={6}><Radio name="dot" />L</RadioLabel>
        </SizeGroup>
        <Row $h={48} $mt={37}>
          <FieldLabel htmlFor="font" $w={171}>基準フォント</FieldLabel>
          <FontPick>
            <Pick
              id="font"
              name="font"
              w={280}
              h={48}
              value="MS Gothic"
              pl={42}
              lead={
                <Ico className="lead" w={26} h={28}>
                  <path d="M1 5V2h15v3M8 2v16M5 18h6" stroke="#888" />
                  <path d="M9 12V9h14v3M16 9v17M13 26h6" />
                </Ico>
              }
            />
          </FontPick>
        </Row>
        <Row $h={42} $mt={29}>
          <FieldLabel htmlFor="delay" $w={293}>レイヤ再生間隔 (ms)</FieldLabel>
          <Spin>
            <SpinInput id="delay" defaultValue="1000" />
            <SpinButton aria-label="Less">▼</SpinButton>
            <SpinButton aria-label="More">▲</SpinButton>
          </Spin>
        </Row>
        <Row $h={40} $mt={24}>
          <Note>※1 起動時の初期値です</Note>
        </Row>
      </Column>
    </DialogPage>
    <DialogFoot>
      <FootNote $c="#3b8124" $s={27}>*緑の項目は次回の起動時から有効になります</FootNote>
      <PushButton>OK</PushButton>
      <PushButton $focus>Cancel</PushButton>
    </DialogFoot>
    <Marker viewBox="0 0 488 182" aria-hidden>
      <ellipse cx="244" cy="91" rx="237" ry="83" fill="none" stroke="#e94426" strokeWidth="10" />
    </Marker>
  </Dialog>
);

export default function App() {
  return (
    <>
      <Global />
      <Screen>
        <TopStrip />
        <Desktop>
          <DesktopCaption>金</DesktopCaption>
          <AppWindow>
            <TitleBar>
              <Gear s={32} />
              <TitleText>Ver9.14yƒtƒŠ[ƒ¥ƒtƒg“Åz</TitleText>
              <CaptionButtons>
                <CaptionButton aria-label="Minimize"><Ico w={20}><path d="M0 10h20" stroke="#999" /></Ico></CaptionButton>
                <CaptionButton aria-label="Maximize"><Ico w={20}><rect x="1" y="1" width="18" height="18" rx="2" stroke="#999" /></Ico></CaptionButton>
                <CaptionButton aria-label="Close"><Ico w={20}><path d="M0 0l20 20M20 0L0 20" stroke="#999" /></Ico></CaptionButton>
              </CaptionButtons>
            </TitleBar>
            <MenuBar>
              {["ƒtƒ@ƒCƒ‹(F)", "ŒÝŠ·(C)", "•ÒW(E)", "ƒc[ƒ‹(T)", "ƒEƒCƒ“ƒhƒE(W)", "ƒwƒ‹ƒv(H)"].map((m) => (
                <MenuItem key={m}>{m}</MenuItem>
              ))}
            </MenuBar>
            <Toolbar>
              <FileTools>
                {fileIcons.map(([n, i]) => (
                  <ToolButton key={n} aria-label={n}>{i}</ToolButton>
                ))}
              </FileTools>
              <TabArea>
                <TabStrip role="tablist">
                  {toolTabs.map(([w, t, i, size], k) => (
                    <ToolTab key={t} role="tab" $w={w} $on={k === 1} $size={size}>
                      {i}
                      {t}
                    </ToolTab>
                  ))}
                </TabStrip>
                <DrawPanel>
                  {drawIcons.map(([n, i], k) => (
                    <ToolButton key={n} aria-label={n} $on={k === 0} $h={60}>{i}</ToolButton>
                  ))}
                  <Rule $h={52} $m={4} />
                  {curveIcons.map(([n, i]) => (
                    <ToolButton key={n} aria-label={n} $h={60}>{i}</ToolButton>
                  ))}
                </DrawPanel>
              </TabArea>
            </Toolbar>
            <Work>
              <SideBar>
                <SideGroup>
                  <ToolButton aria-label="Pick colour" $h={44}>
                    <Ico w={34} h={32}><path d="M1 27q8-6 12-2t12 2v4H1z" fill="#3f8080" stroke="none" /><path d="M5 27L18 14l4 4L9 28H5z" fill="#bff" /><path d="M17 11l8 8M20 14l9-9" strokeWidth="7" /><path d="M28 3l4 2" stroke="#777" strokeWidth="3" /></Ico>
                  </ToolButton>
                </SideGroup>
                <SideGroup>
                  <ToolButton aria-label="Solid" $on $h={42}><Ico w={48} h={4}><path d="M0 2h48" strokeWidth="4" /></Ico></ToolButton>
                  {lineDashes.map((d) => (
                    <ToolButton key={d} aria-label={`Line ${d}`} $h={42}><Ico w={48} h={4}><path d="M0 2h48" strokeWidth="4" strokeDasharray={d} /></Ico></ToolButton>
                  ))}
                  <ToolButton aria-label="Guide" $h={42}><Ico w={48} h={4}><path d="M0 2h46" stroke="#3b8124" strokeWidth="4" /></Ico></ToolButton>
                </SideGroup>
                <SideGroup>
                  {[2, 4, 6].map((w, k) => (
                    <ToolButton key={w} aria-label={`Width ${w}`} $on={k === 0} $h={42}><Ico w={16} h={6}><path d="M0 3h16" strokeWidth={w} /></Ico></ToolButton>
                  ))}
                </SideGroup>
                <SideGroup>
                  <ToolButton aria-label="Auto colour" $on $h={42}><AutoMark>AUTO</AutoMark></ToolButton>
                  <ToolButton aria-label="Black" $h={42}><Swatch $c="#000" $line="#fff" /></ToolButton>
                  {swatches.map((c) => (
                    <ToolButton key={c} aria-label={c} $h={42}><Swatch $c={c} /></ToolButton>
                  ))}
                </SideGroup>
              </SideBar>
              <Canvas />
              <VSplit>
                <VRail />
                <VGrip>
                  <Ico w={6} h={10}><path d="M0 0l6 5-6 5z" fill="#3a7bd0" stroke="none" /></Ico>
                  <VDots />
                  <Ico w={6} h={10}><path d="M0 0l6 5-6 5z" fill="#3a7bd0" stroke="none" /></Ico>
                </VGrip>
                <VRail />
              </VSplit>
              <RightPanel>
                <PanelTabs role="tablist">
                  <PanelTab role="tab" $w={100} $on>‚Ø[ƒW</PanelTab>
                  <PanelTab role="tab" $w={93}>î•ñ</PanelTab>
                  <PanelTab role="tab" $w={154}>ƒGƒfƒBƒ^</PanelTab>
                  <PanelTab role="tab" $w={92}>•tâ³</PanelTab>
                </PanelTabs>
                <PageForm>
                  <PageHead>
                    <PageChoices>
                      <FormRow $h={46} $pl={16}>
                        {["A0", "A1", "A2", "A3", "A4"].map((s) => (
                          <RadioLabel key={s} $w={82}><Radio name="size" defaultChecked={s === "A4"} />{s}</RadioLabel>
                        ))}
                      </FormRow>
                      <FormRow $h={46} $pl={12} $gap={20}>
                        <Ico w={32} h={28}><path d="M1 2h24l6 6v18H1z" fill="#dcebfb" stroke="#4a78c8" /><path d="M4 21h24" stroke="#7cc0f5" /></Ico>
                        <RadioLabel $w={156}>
                          <Radio name="dir" />
                          Landscape
                        </RadioLabel>
                        <RadioLabel $gap={8}>
                          <Stack>
                            <Ico w={30} h={32}><path d="M2 1h22l5 6v24H2z" fill="#cfe3fa" stroke="#4a78c8" /></Ico>
                            <Radio name="dir" defaultChecked />
                          </Stack>
                          Portrait
                        </RadioLabel>
                      </FormRow>
                    </PageChoices>
                    <Ico w={38} h={46}><path d="M1 1h26l10 8v36H1z" fill="#e0e0e0" stroke="#a0a0a0" /><path d="M8 20q10-10 18-4l4-3v10H20l3-3q-7-4-15 0zM30 28q-10 10-18 4l-4 3V25h10l-3 3q7 4 15 0z" fill="#777" stroke="none" /></Ico>
                  </PageHead>
                  <FormRow $h={58} $pl={6} $gap={14}>
                    <Pick w={208} h={40} name="Scale" />
                    <Ico w={42} h={38}><rect x="7" y="9" width="28" height="20" fill="#fff" /><path d="M20 29V18h15M20 23h15" /><path d="M21 0l4 4h-8zM21 38l4-4h-8zM0 19l4-4v8zM42 19l-4-4v8z" fill="#1212e6" stroke="none" /></Ico>
                    <TextField $w={97} aria-label="Width" />
                    <TextField $w={97} aria-label="Height" />
                  </FormRow>
                  <FormRow $h={50} $pl={12} $gap={12}>
                    <Ico w={32} h={30}><path d="M1 1h30v28" strokeDasharray="3 3" /><path d="M1 10h18l5 5v13H1z" fill="#dcebfb" stroke="#4a78c8" /></Ico>
                    <Pick w={160} h={40} name="Margin" />
                    <Ico w={32} h={30}><path d="M5 2v16M1 5l4-4 4 4M1 16l4 4 4-4" stroke="#2d4f88" /><path d="M9 28h7M20 28h9M12 27L25 9l2 18M16 21h10" stroke="#2d5aa8" strokeWidth="3" /></Ico>
                    <Pick w={160} h={40} name="Text height" />
                    <Ico w={38} h={34}><path d="M1 9h16M9 1v16" stroke="#5cae50" strokeWidth="4" /><path d="M21 9h16" stroke="#cb5543" strokeWidth="4" /><rect x="3" y="20" width="12" height="11" fill="#7a90c8" stroke="none" /><path d="M21 26h16M27 19h4M27 33h4" stroke="#444" strokeWidth="3" /></Ico>
                  </FormRow>
                </PageForm>
                <Split up />
                <Layers grow={709} last={frames} />
                <Split />
                <Layers gray grow={331} last={film} />
              </RightPanel>
              <Settings />
            </Work>
            <BottomBar>
              <Pick w={840} h={46} name="Command" />
              <ToolButton aria-label="Folder" $w={84} $h={46}><Ico w={34} h={28}><path d="M2 25V3h10l3 4h13v4" fill="#f7e689" stroke="#b08a2c" /><path d="M2 25l6-14h24l-5 14z" fill="#fbd774" stroke="#b08a2c" /></Ico></ToolButton>
              {snapIcons.map(([n, on, i]) => (
                <ToolButton key={n} aria-label={n} $on={on} $w={84} $h={46}>{i}</ToolButton>
              ))}
              <Rule $h={40} $m={5} />
              <ToolButton aria-label="Dimension lamp" $w={84} $h={46}>
                <MarkText>123<Ico w={46} h={40}><path d="M2 5v31M42 5v14M2 18h26M8 14l-5 4 5 4" stroke="#000080" />{smallBulb(34, 25)}</Ico></MarkText>
              </ToolButton>
              <ToolButton aria-label="Text lamp" $w={84} $h={46}>
                <MarkText>Text<Ico w={46} h={40}>{smallBulb(34, 25)}</Ico></MarkText>
              </ToolButton>
              <Rule $h={40} $m={7} />
              {viewIcons.map(([n, w, i]) => (
                <ToolButton key={n} aria-label={n} $w={w} $h={46}>{i}</ToolButton>
              ))}
            </BottomBar>
            <StatusBar>
              <StatusCell $w={249} $c>‚O“ ü</StatusCell>
              <StatusCell $w={661} />
              <StatusCell $w={180} $c><Ico w={30} h={34}><path d="M8 6q-6 5-5 12 2 9 11 9 10 0 11-9" stroke="#2f66c0" strokeWidth="4" /><path d="M14 3h14l-3 5v10h-4l-2-8h-5z" fill="#2f66c0" stroke="none" /></Ico></StatusCell>
              <StatusCell $w={160} $c>S</StatusCell>
              <StatusCell $w={60} $c><Ico w={36} h={34}><path d="M2 4h34M2 13h34M2 23h34" stroke="#1a1ab8" strokeDasharray="2 6" /><circle cx="11" cy="23" r="5" fill="#f7ee3c" stroke="none" /><path d="M11 20v6M8 23h6" stroke="#b02020" /></Ico></StatusCell>
              <StatusCell $w={99} $c>10</StatusCell>
              <StatusCell $w={61} $c><Ico w={34} h={34}><circle cx="17" cy="17" r="11" fill="#fff" /><path d="M17 6a11 11 0 0 1 11 11H17zM17 28A11 11 0 0 1 6 17h11z" fill="#888" stroke="none" /><path d="M0 17h34M17 0v34" /></Ico></StatusCell>
              <StatusCell $w={199}>X</StatusCell>
              <StatusCell $w={200}>Y</StatusCell>
              <StatusCell $w={121}>L</StatusCell>
              <StatusCell $w={80}>G</StatusCell>
            </StatusBar>
          </AppWindow>
        </Desktop>
        <TaskBar>
          <TaskApps>
            {taskIcons.map(([n, i], k) => (
              <TaskButton key={n} aria-label={n} $on={k === 8}>
                {i}
                {k === 8 && <RunMark />}
              </TaskButton>
            ))}
          </TaskApps>
          <Tray>
            <Ico w={26} h={18}><path d="M2 16L13 3l11 13" /></Ico>
            <Ico w={34} h={24}><g stroke="none"><path d="M8 22a8 8 0 0 1 0-14A10 10 0 0 1 26 7a8 8 0 0 1 0 15z" fill="#2f6fcb" /><path d="M9 7a10 10 0 0 1 17 0l-6 7z" fill="#2a58b0" /><path d="M4 21l13-9 14 8q-2 3-5 3H8z" fill="#55a8ea" /></g></Ico>
            <TrayLetter>A</TrayLetter>
            <Ico w={36} h={34}><path d="M22 3H5q-3 0-3 3v18q0 3 3 3h19M11 27v5M19 27v5M7 32h17" /><rect x="24" y="2" width="9" height="12" rx="2" /><path d="M25 7h8M28 14v18" /></Ico>
            <Ico w={32} h={28}><path d="M2 10h4l8-7v22l-8-7H2zM18 9q3 5 0 10" /><path d="M22 6q6 8 0 16M26 3q8 11 0 22" stroke="#b5bcc8" /></Ico>
            <Ico w={34} h={22}><rect x="2" y="2" width="27" height="18" rx="4" strokeWidth="3" /><rect x="6" y="5" width="12" height="12" fill="#111" stroke="none" /><path d="M31 8v6" strokeWidth="4" /></Ico>
            <Clock>15:22<br />2021/12/27</Clock>
          </Tray>
        </TaskBar>
      </Screen>
    </>
  );
}
